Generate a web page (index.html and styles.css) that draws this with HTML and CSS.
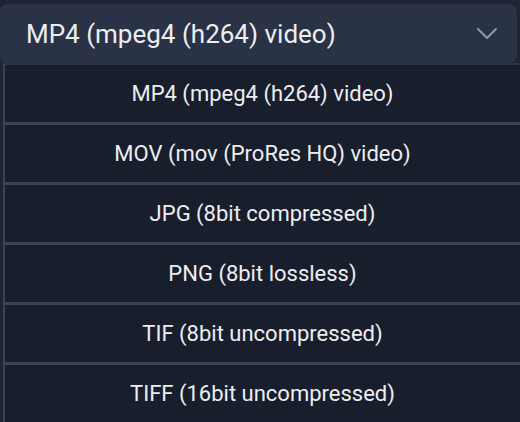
FILE: index.html
```html
<!DOCTYPE html>
<html>
<head>
<meta charset="utf-8">
<link rel="stylesheet" href="styles.css">
</head>
<body>
<div class="page">
  <div class="select">
    <span class="select-value">MP4 (mpeg4 (h264) video)</span>
    <svg class="chevron" width="22" height="14" viewBox="0 0 22 14"><path d="M2 2 L11 11 L20 2" fill="none" stroke="#8e97aa" stroke-width="2" stroke-linecap="round" stroke-linejoin="round"/></svg>
  </div>
  <ul class="menu">
    <li class="item">MP4 (mpeg4 (h264) video)</li>
    <li class="item">MOV (mov (ProRes HQ) video)</li>
    <li class="item">JPG (8bit compressed)</li>
    <li class="item">PNG (8bit lossless)</li>
    <li class="item">TIF (8bit uncompressed)</li>
    <li class="item">TIFF (16bit uncompressed)</li>
  </ul>
</div>
</body>
</html>
```
FILE: styles.css
```css
html, body {
  margin: 0;
  padding: 0;
  background: #1e2434;
  overflow: hidden;
}
.page {
  width: 520px;
  height: 422px;
  font-family: Roboto, "Liberation Sans", sans-serif;
  color: #eceef2;
}
.select {
  margin: 4px 3px 0 0;
  height: 59px;
  background: #2a3346;
  border-radius: 8px;
  display: flex;
  align-items: center;
  justify-content: space-between;
  padding: 0 19px 0 26px;
  box-sizing: border-box;
}
.select-value {
  font-size: 26px;
}
.chevron {
  display: block;
}
.menu {
  list-style: none;
  margin: 0 0 0 3px;
  padding: 0;
  border-top: 2px solid #2c3445;
  border-left: 2px solid #3a4356;
  background: #191e2c;
}
.item {
  height: 57px;
  display: flex;
  align-items: center;
  justify-content: center;
  font-size: 22px;
  border-bottom: 3px solid #3a4255;
}
```
